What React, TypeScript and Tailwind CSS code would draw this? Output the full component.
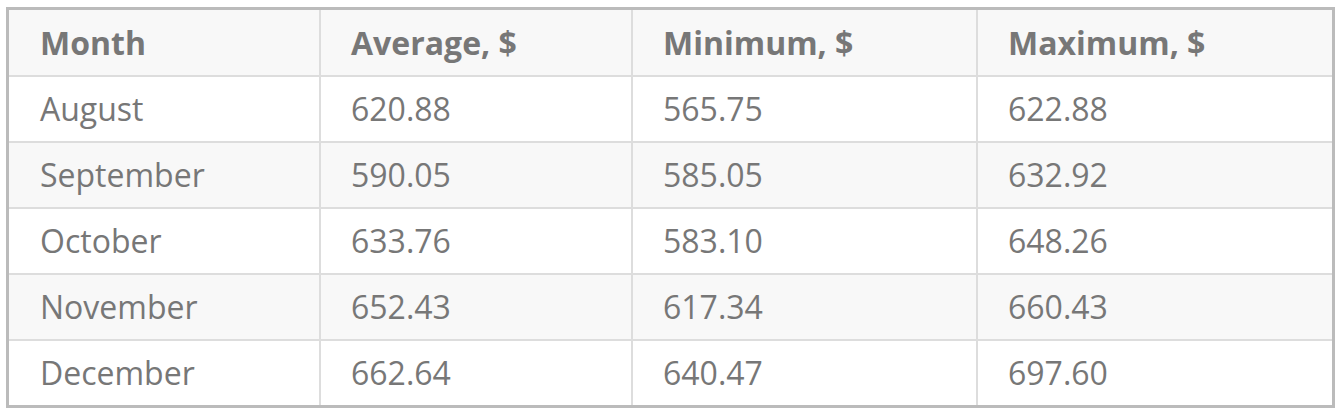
const rows = [
  ["August", "620.88", "565.75", "622.88"],
  ["September", "590.05", "585.05", "632.92"],
  ["October", "633.76", "583.10", "648.26"],
  ["November", "652.43", "617.34", "660.43"],
  ["December", "662.64", "640.47", "697.60"],
];

const headers = ["Month", "Average, $", "Minimum, $", "Maximum, $"];

export default function App() {
  return (
    <div className="h-[408px] w-[1336px] overflow-hidden bg-white pl-[6px] pt-[7px] font-['Open_Sans',sans-serif] text-[32px] text-[#777777]">
      <div className="grid w-[1329px] grid-cols-[310px_310px_343px_354px] gap-[2px] border-[3px] border-[#bbbbbb] bg-[#dddddd]">
        {headers.map((h, i) => (
          <div
            key={h}
            className={`flex h-[65px] items-center bg-[#f8f8f8] font-bold ${i === 0 ? "pl-[31px]" : "pl-[30px]"}`}
          >
            {h}
          </div>
        ))}
        {rows.map((r, ri) =>
          r.map((c, ci) => (
            <div
              key={`${ri}-${ci}`}
              className={`flex h-[64px] items-center ${ri % 2 === 1 ? "bg-[#f8f8f8]" : "bg-white"} ${ci === 0 ? "pl-[31px]" : "pl-[30px]"}`}
            >
              {c}
            </div>
          ))
        )}
      </div>
    </div>
  );
}
